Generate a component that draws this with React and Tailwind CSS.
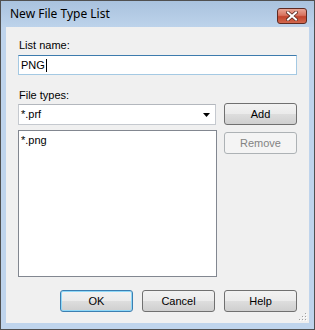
import React from "react";

const font = { fontFamily: '"Liberation Sans", Arial, sans-serif' };

function Button({ children, primary, disabled, className = "" }) {
  let look =
    "border-[#707070] text-black bg-[linear-gradient(#f2f2f2_0%,#ebebeb_48%,#dddddd_52%,#cfcfcf_100%)]";
  if (primary)
    look =
      "border-[#3c7fb1] text-black shadow-[inset_0_0_0_1px_#8fd8f8] bg-[linear-gradient(#f2f2f2_0%,#ebebeb_48%,#dddddd_52%,#cfcfcf_100%)]";
  if (disabled) look = "border-[#adb2b5] text-[#838383] bg-[#f4f4f4]";
  return (
    <div
      className={`h-[22px] w-[73px] rounded-[3px] border flex items-center justify-center text-[11px] ${look} ${className}`}
    >
      {children}
    </div>
  );
}

function SizeGrip() {
  const dots = [
    [6, 0],
    [3, 3],
    [6, 3],
    [0, 6],
    [3, 6],
    [6, 6],
  ];
  return (
    <svg width="9" height="9" className="absolute right-[1px] bottom-[1px]">
      {dots.map(([x, y]) => (
        <g key={`${x}-${y}`}>
          <rect x={x + 1} y={y + 1} width="1" height="1" fill="#ffffff" />
          <rect x={x} y={y} width="1" height="1" fill="#a0a0a0" />
        </g>
      ))}
    </svg>
  );
}

export default function App() {
  return (
    <div
      className="w-[315px] h-[330px] border border-[#505050] bg-[#bfd4ec] flex flex-col"
      style={font}
    >
      <div className="h-[26px] flex items-start justify-between pl-[9px] pr-[7px] bg-[linear-gradient(#a9c2de,#bdd3eb)]">
        <span
          className="mt-[5px] text-[12px] leading-[16px] text-black"
          style={{ fontFamily: '"Noto Sans", "Open Sans", sans-serif' }}
        >
          New File Type List
        </span>
        <div className="mt-[7px] w-[30px] h-[16px] rounded-[3px] border border-[#5e2a22] bg-[linear-gradient(#e8a595_0%,#d8735f_45%,#c2432c_55%,#d2694f_100%)] flex items-center justify-center">
          <svg width="12" height="10" viewBox="0 0 12 10">
            <path d="M2 1.5 L10 8.5 M10 1.5 L2 8.5" stroke="#5a2a22" strokeWidth="3.6" strokeLinecap="square" />
            <path d="M2 1.5 L10 8.5 M10 1.5 L2 8.5" stroke="#ffffff" strokeWidth="2" strokeLinecap="square" />
          </svg>
        </div>
      </div>

      <div className="relative flex-1 mx-[5px] mb-[6px] bg-[#f0f0f0] px-[12px] pt-[12px] flex flex-col text-[11px] text-black">
        <div className="h-[13px] leading-[13px] pl-[1px]">List name:</div>
        <div className="mt-[3px] h-[20px] border border-[#a4c9e3] border-t-[#3d7bad] bg-white flex items-center pl-[2px]">
          <span>PNG</span>
          <span className="w-[1px] h-[13px] bg-black ml-[1px]" />
        </div>

        <div className="mt-[14px] h-[13px] leading-[13px] pl-[1px]">File types:</div>
        <div className="mt-[1px] flex gap-[8px]">
          <div className="mt-[1px] w-[198px] h-[21px] border border-[#c5c9cf] border-t-[#b3b7bd] bg-white flex items-center justify-between pl-[2px] pr-[5px]">
            <span>*.prf</span>
            <svg width="7" height="4" viewBox="0 0 7 4">
              <path d="M0 0 H7 L3.5 4 Z" fill="#000" />
            </svg>
          </div>
          <Button>Add</Button>
        </div>

        <div className="mt-[5px] flex gap-[7px]">
          <div className="w-[199px] h-[147px] border border-[#828790] bg-white pl-[2px] pt-[1px]">
            *.png
          </div>
          <Button disabled className="mt-[2px]">
            Remove
          </Button>
        </div>

        <div className="mt-[13px] flex justify-end gap-[9px]">
          <Button primary>OK</Button>
          <Button>Cancel</Button>
          <Button>Help</Button>
        </div>

        <SizeGrip />
      </div>
    </div>
  );
}
